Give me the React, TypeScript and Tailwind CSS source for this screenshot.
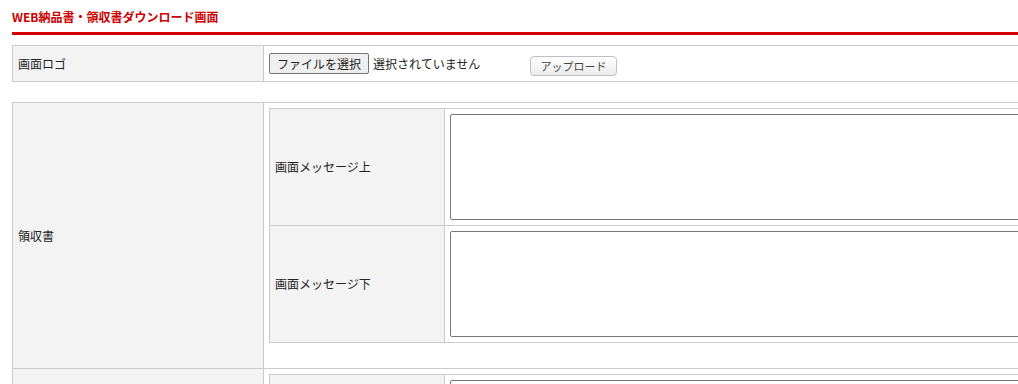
const font = { fontFamily: '"Noto Sans CJK JP", "Noto Sans", sans-serif' }

const messageRows: string[] = ['画面メッセージ上', '画面メッセージ下']

function MessageTable({ showLabels }: { showLabels: boolean }) {
  return (
    <div className="border border-[#cccccc]">
      {messageRows.map((label, i) => (
        <div key={label} className={`flex ${i > 0 ? 'border-t border-[#cccccc]' : ''}`}>
          <div className="w-[175px] shrink-0 bg-[#f2f3f2] border-r border-[#cccccc] flex items-center pl-[5px] text-[12px] leading-[16px] text-[#222]">
            {showLabels ? label : ''}
          </div>
          <div className="flex-1 p-[5px]">
            <textarea className="block w-full h-[106px] border border-[#767676] rounded-[2px] bg-white resize-none outline-none" />
          </div>
        </div>
      ))}
    </div>
  )
}

function ReceiptRow({ label, top }: { label: string; top: boolean }) {
  return (
    <div className={`flex ${top ? '' : 'border-t border-[#cccccc]'}`}>
      <div className="w-[251px] shrink-0 bg-[#f2f3f2] border-r border-[#cccccc] flex items-center pl-[5px] text-[12px] leading-[16px] text-[#222]">
        {label}
      </div>
      <div className="flex-1 p-[5px]">
        <MessageTable showLabels={top} />
        <div className="h-[20px]" />
      </div>
    </div>
  )
}

export default function App() {
  return (
    <div className="w-full h-[384px] overflow-hidden bg-white" style={font}>
      <div className="w-[1320px] pl-[12px]">
        <div className="pt-[8px] pb-[6px] border-b-[3px] border-[#d40000]">
          <p className="text-[12px] leading-[18px] font-bold text-[#cc0000]">
            WEB納品書・領収書ダウンロード画面
          </p>
        </div>

        <div className="mt-[10px] border border-[#cccccc] flex h-[37px]">
          <div className="w-[251px] shrink-0 bg-[#f2f3f2] border-r border-[#cccccc] flex items-center pl-[5px] text-[12px] leading-[16px] text-[#222]">
            画面ロゴ
          </div>
          <div className="flex-1 flex items-center pl-[5px]">
            <div className="w-[261px] flex items-center">
              <button className="h-[21px] px-[7px] border border-[#767676] rounded-[2px] bg-[#efefef] text-[12px] leading-[16px] text-[#222]">
                ファイルを選択
              </button>
              <span className="ml-[4px] text-[12px] leading-[16px] text-[#222]">選択されていません</span>
            </div>
            <button className="mt-[4px] w-[87px] h-[20px] border border-[#bdbdcc] rounded-[4px] bg-gradient-to-b from-white to-[#ececec] text-[11px] leading-[14px] text-[#444]">
              アップロード
            </button>
          </div>
        </div>

        <div className="mt-[20px] border border-[#cccccc]">
          <ReceiptRow label="領収書" top />
          <ReceiptRow label="" top={false} />
        </div>
      </div>
    </div>
  )
}
